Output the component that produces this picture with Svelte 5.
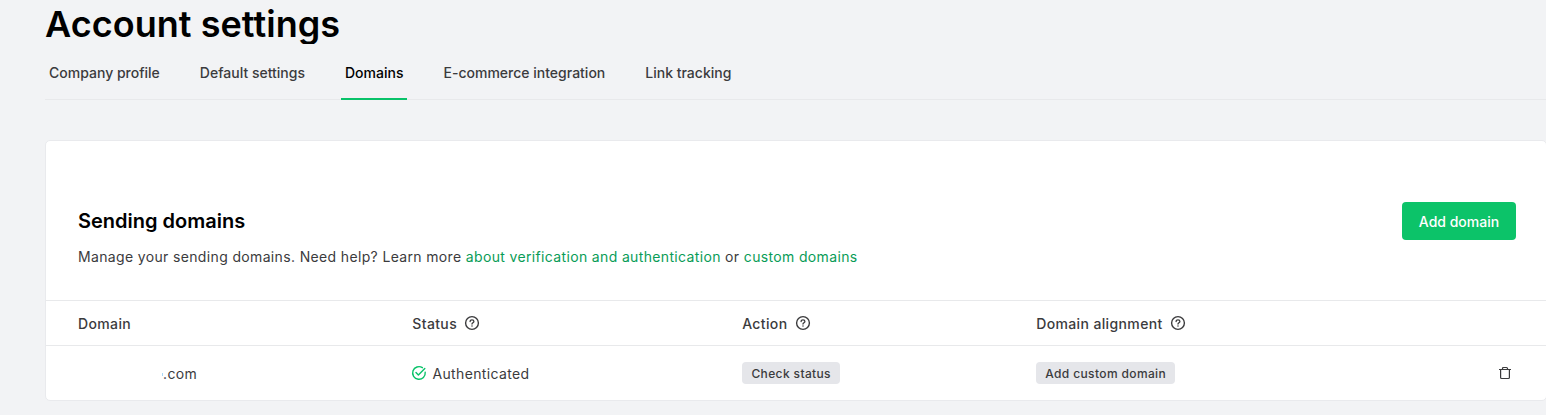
<script>
  const tabs = ['Company profile', 'Default settings', 'Domains', 'E-commerce integration', 'Link tracking'];
  const active = 'Domains';
</script>

{#snippet help()}
  <svg class="help" width="16" height="16" viewBox="0 0 16 16" fill="none" stroke="#3b3b3d" stroke-linecap="round" stroke-linejoin="round">
    <circle cx="8" cy="8" r="6.4" stroke-width="1.4" />
    <path d="M6.1 6.5C6.1 5.4 6.9 4.8 8 4.8s1.9.7 1.9 1.7C9.9 7.7 8 7.8 8 9" stroke-width="1.3" />
    <circle cx="8" cy="11" r=".75" fill="#3b3b3d" stroke="none" />
  </svg>
{/snippet}

<main>
  <h1>Account settings</h1>
  <nav>
    {#each tabs as tab}
      <a class:active={tab === active} href="#top">{tab}</a>
    {/each}
  </nav>

  <section>
    <header>
      <div>
        <h2>Sending domains</h2>
        <p>Manage your sending domains. Need help? Learn more <a href="#top">about verification and authentication</a> or <a href="#top">custom domains</a></p>
      </div>
      <button class="primary">Add domain</button>
    </header>
    <div class="row head">
      <span>Domain</span>
      <span>Status {@render help()}</span>
      <span>Action {@render help()}</span>
      <span>Domain alignment {@render help()}</span>
    </div>
    <div class="row body">
      <span class="name"><i></i>.com</span>
      <span class="status">
        <svg width="16" height="16" viewBox="0 0 16 16" fill="none" stroke="#09c269" stroke-width="1.4" stroke-linecap="round" stroke-linejoin="round">
          <path d="M14.2 7.2A6.3 6.3 0 1 1 11.4 2.7" />
          <path d="M5 7.6l2.4 2.5 6.4-6.5" />
        </svg>
        Authenticated
      </span>
      <span><button class="tag check">Check status</button></span>
      <span><button class="tag custom">Add custom domain</button></span>
      <svg class="trash" width="14" height="14" viewBox="0 0 14 14" fill="none" stroke="#3b3b3d" stroke-width="1.2" stroke-linejoin="round">
        <path d="M1 3.5h12M2.6 3.5v8q0 1 1 1h6.8q1 0 1-1v-8M4.5 3.5v-1q0-1 1-1h3q1 0 1 1v1" />
      </svg>
    </div>
  </section>
</main>

<style>
  :global(body) {
    background: #f2f3f5;
  }
  main {
    height: 415px;
    overflow: hidden;
    box-sizing: border-box;
    padding: 4px 0 0 45px;
    background: #f2f3f5;
    font-family: Inter, sans-serif;
    font-size: 14px;
    color: #3b3b3d;
  }
  h1 {
    margin: 0;
    height: 40px;
    overflow: hidden;
    font-size: 36px;
    line-height: 40px;
    font-weight: 600;
    letter-spacing: 0.04px;
    color: #000;
  }
  nav {
    display: flex;
    gap: 32px;
    height: 55px;
    border-bottom: 1px solid #e8e9eb;
  }
  nav a {
    height: 37px;
    padding: 17px 4px 0;
    line-height: 24px;
    font-weight: 500;
    letter-spacing: 0.005px;
    color: #3b3b3d;
    text-decoration: none;
    border-bottom: 2px solid transparent;
  }
  nav a.active {
    color: #000;
    border-color: #09c269;
  }
  section {
    width: 1502px;
    height: 261px;
    box-sizing: border-box;
    margin-top: 40px;
    background: #fff;
    border: 1px solid #e9eaed;
    border-radius: 5px;
  }
  header {
    display: flex;
    justify-content: space-between;
    align-items: flex-start;
    height: 98px;
    padding: 61px 30px 0 32px;
  }
  h2 {
    margin: 5px 0 0;
    font-size: 20px;
    line-height: 28px;
    font-weight: 600;
    color: #000;
  }
  p {
    margin: 10px 0 0;
    line-height: 24px;
    letter-spacing: 0.35px;
  }
  p a {
    color: #099c57;
    text-decoration: none;
  }
  button {
    border: 0;
    font: 500 14px Inter, sans-serif;
  }
  .primary {
    width: 114px;
    height: 38px;
    padding: 1px 0 0;
    border-radius: 4px;
    background: #0cc369;
    color: #fff;
  }
  .row {
    display: grid;
    grid-template-columns: 334.3px 329.9px 294px 1fr auto;
    align-items: center;
    padding: 0 34px 0 32px;
    border-top: 1px solid #e8e9eb;
    letter-spacing: 0.35px;
  }
  .row span {
    display: flex;
    align-items: center;
  }
  .head {
    height: 44px;
    font-weight: 500;
    letter-spacing: 0.37px;
  }
  .help {
    margin: -1px 0 0 7.3px;
  }
  .body {
    height: 54px;
  }
  .name i {
    width: 1px;
    height: 3px;
    margin: 3px 0 0 84px;
    background: #a9d8f7;
  }
  .status svg {
    margin: -1px 5.2px 0 -1px;
  }
  .tag {
    height: 22px;
    padding: 0;
    border-radius: 4px;
    background: #e5e6ea;
    color: #3b3b3d;
    font-size: 12px;
    font-weight: 500;
    letter-spacing: 0.37px;
    white-space: nowrap;
  }
  .check {
    width: 98px;
  }
  .custom {
    width: 139px;
  }
</style>
